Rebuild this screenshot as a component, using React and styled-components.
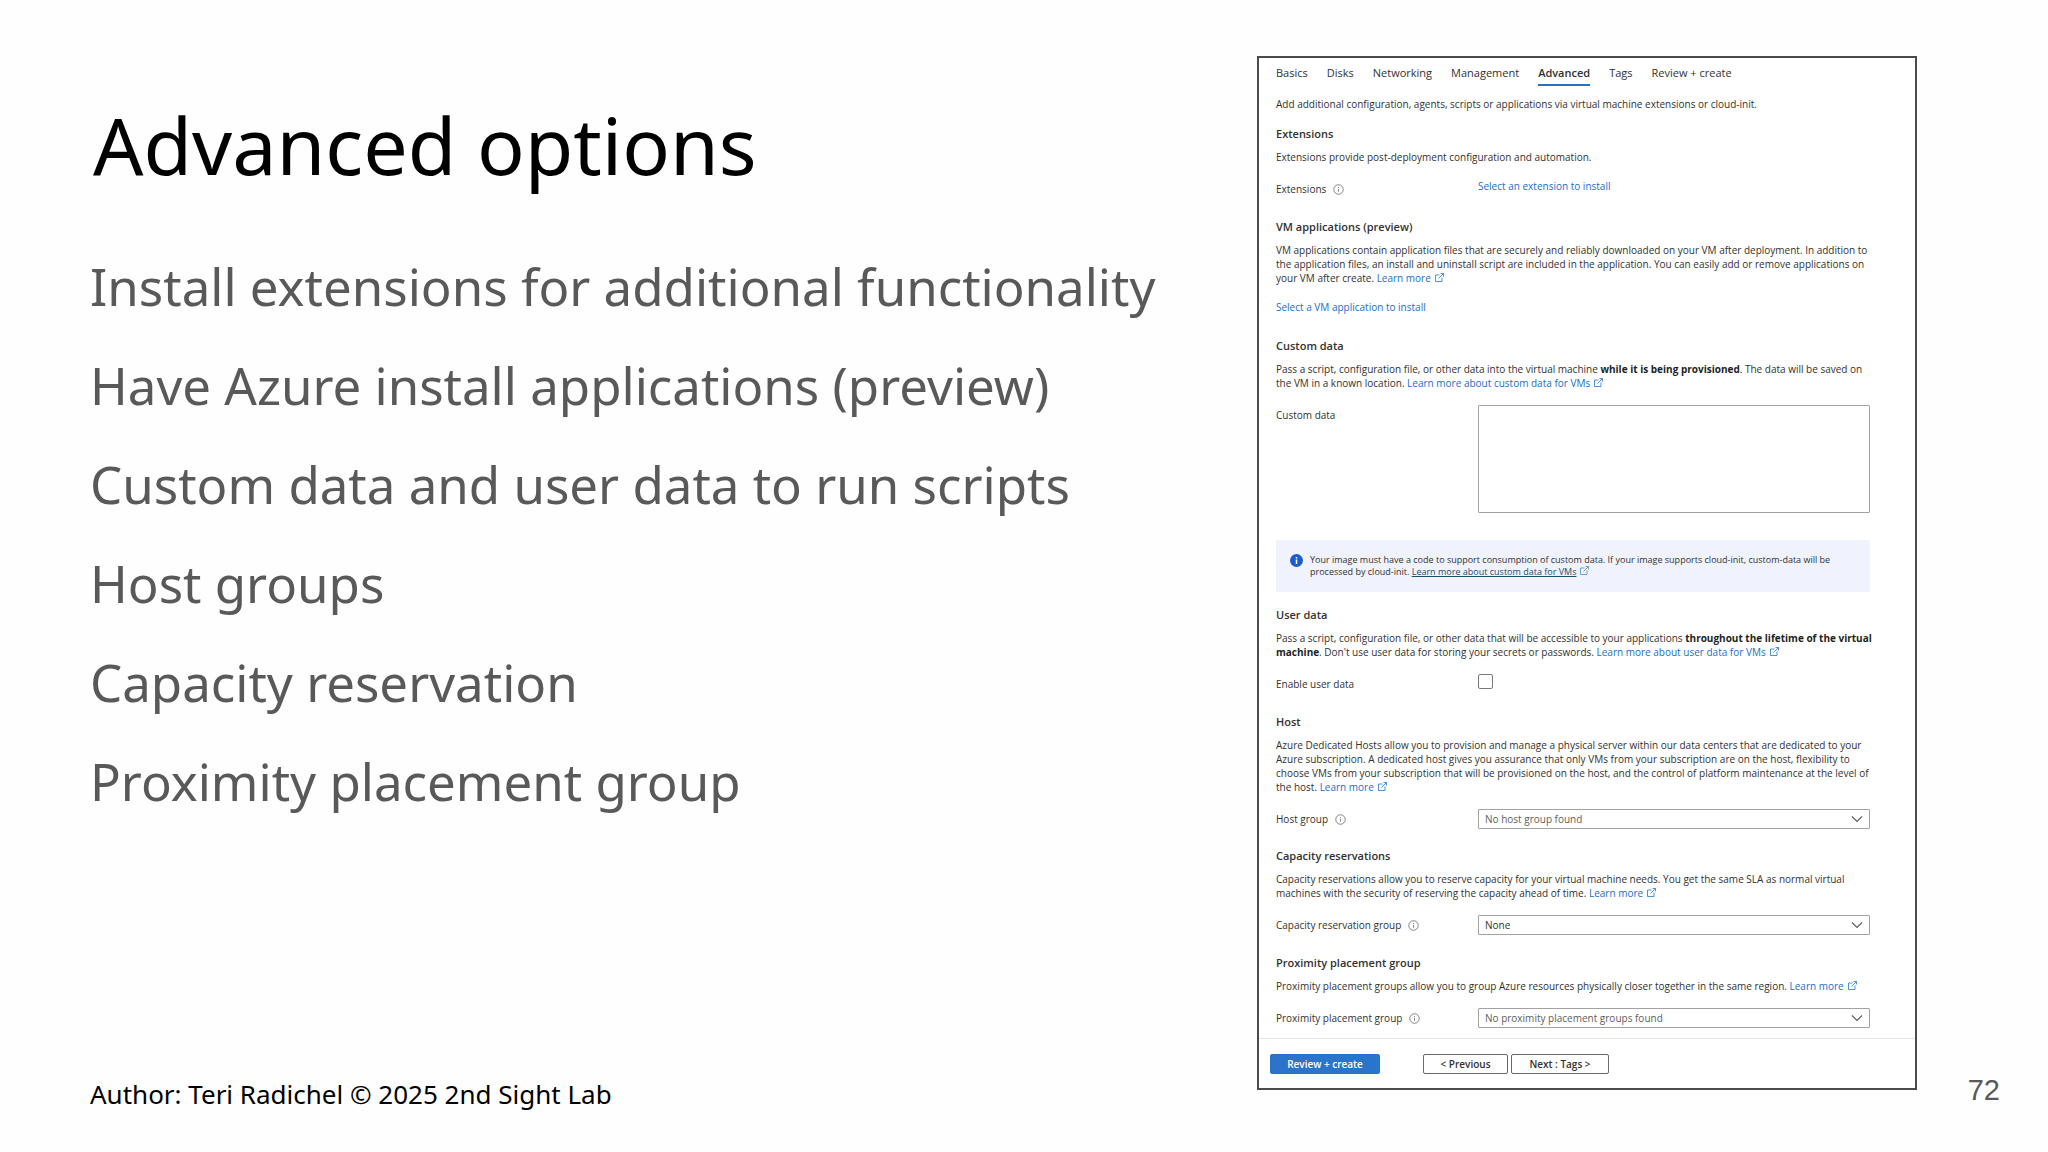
import React from "react";
import styled, { createGlobalStyle, css } from "styled-components";

const GlobalStyle = createGlobalStyle`
  *, *::before, *::after { box-sizing: border-box; }
  body { margin: 0; background: #fefefe; font-family: "Noto Sans", "Open Sans", sans-serif; }
  h1, h2, p, ul { margin: 0; padding: 0; }
`;

const Slide = styled.main`
  display: grid;
  grid-template-columns: minmax(0, 1257fr) minmax(0, 660fr) minmax(0, 131fr);
  min-height: 100vh;
`;

const Outline = styled.section`
  display: flex;
  flex-direction: column;
  padding: 91px 24px 39px 90px;
`;

const Title = styled.h1`
  font-size: 79px;
  line-height: 108px;
  font-weight: 400;
  color: #000;
  padding-left: 3px;
`;

const Topics = styled.ul`
  list-style: none;
  margin-top: 38px;
  color: #595959;
  font-size: 51px;
  line-height: 99px;
  white-space: nowrap;
`;

const Author = styled.footer`
  margin-top: auto;
  font-size: 26px;
  line-height: 38px;
  color: #000;
`;

const PageNumber = styled.aside`
  display: flex;
  align-items: flex-end;
  justify-content: flex-end;
  padding: 0 48px 46px 0;
  font-family: "Liberation Sans", Arial, sans-serif;
  font-size: 29px;
  line-height: 32px;
  color: #595959;
`;

const Panel = styled.form`
  align-self: start;
  margin-top: 56px;
  border: 2px solid #4b4b4b;
  background: #fff;
  color: #323130;
  font-family: "Open Sans", "Noto Sans", sans-serif;
  font-size: 10px;
  line-height: 14px;
`;

const PanelBody = styled.div`
  padding: 8px 45px 10px 17px;
`;

const Tabs = styled.nav`
  display: flex;
  gap: 19px;
  font-size: 11px;
`;

const Tab = styled.a`
  color: inherit;
  text-decoration: none;
  padding-bottom: 4px;
  border-bottom: 2px solid transparent;
  ${(p) =>
    p.$active &&
    css`
      font-weight: 600;
      border-color: #2473c5;
    `}
`;

const Intro = styled.p`
  margin-top: 11px;
`;

const Section = styled.section`
  margin-top: ${(p) => p.$gap || 21}px;
`;

const Heading = styled.h2`
  font-size: 11px;
  line-height: 14px;
  font-weight: 600;
  margin-bottom: 9px;
`;

const Text = styled.p`
  white-space: nowrap;
`;

const Strong = styled.strong`
  font-weight: 700;
  color: #201f1e;
`;

const Link = styled.a`
  color: #1a6fc4;
  text-decoration: none;
  svg { margin-left: 4px; }
`;

const NoticeLink = styled.a`
  color: #17506e;
  text-decoration: underline;
`;

const LinkRow = styled.div`
  margin-top: 15px;
`;

const Field = styled.div`
  display: grid;
  grid-template-columns: 202px minmax(0, 1fr);
  align-items: start;
  margin-top: 15px;
  min-height: 20px;
`;

const Label = styled.label`
  display: flex;
  align-items: center;
  gap: 7px;
  line-height: 20px;
`;

const SelectBox = styled.div`
  position: relative;
  svg { position: absolute; right: 7px; top: 6px; pointer-events: none; }
`;

const Select = styled.select`
  display: block;
  appearance: none;
  width: 100%;
  height: 20px;
  padding: 0 24px 0 6px;
  border: 1px solid #a3a2a1;
  border-radius: 1px;
  background: #fff;
  color: ${(p) => (p.$muted ? "#605e5c" : "#323130")};
  font: inherit;
`;

const TextArea = styled.textarea`
  display: block;
  width: 100%;
  height: 108px;
  border: 1px solid #a3a2a1;
  border-radius: 1px;
  background: #fff;
  resize: none;
  font: inherit;
`;

const Checkbox = styled.input`
  appearance: none;
  margin: 0;
  width: 15px;
  height: 15px;
  border: 1px solid #7a7978;
  border-radius: 2px;
  background: #fff;
`;

const Notice = styled.div`
  display: flex;
  gap: 7px;
  margin-top: 27px;
  padding: 14px;
  background: #f0f3fe;
  font-size: 9px;
  line-height: 12px;
  white-space: nowrap;
  > svg { flex: none; }
  a + svg { margin-left: 4px; color: #4c82b5; }
`;

const Actions = styled.div`
  display: flex;
  padding: 15px 11px 14px;
  border-top: 1px solid #e6e6e6;
`;

const Button = styled.button`
  height: 20px;
  padding: 0;
  width: ${(p) => p.$width}px;
  margin-right: ${(p) => p.$after || 0}px;
  border: 1px solid ${(p) => (p.$primary ? "#2b74cb" : "#6b6a69")};
  border-radius: 2px;
  background: ${(p) => (p.$primary ? "#2b74cb" : "#fff")};
  color: ${(p) => (p.$primary ? "#fff" : "#323130")};
  font: 600 10px/14px "Open Sans", "Noto Sans", sans-serif;
`;

const External = () => (
  <svg width="9" height="9" viewBox="0 0 18 18" fill="none" stroke="currentColor" strokeWidth="1.5" aria-hidden="true">
    <path d="M9 4H1v13h13V9M11 1h6v6M17 1 7 11" />
  </svg>
);

const InfoOutline = () => (
  <svg width="11" height="11" viewBox="0 0 22 22" fill="none" stroke="#605e5c" strokeWidth="1.5" aria-hidden="true">
    <circle cx="11" cy="11" r="9.5" />
    <path d="M11 9.5v6M11 6v2" />
  </svg>
);

const InfoSolid = () => (
  <svg width="13" height="13" viewBox="0 0 26 26" aria-hidden="true">
    <circle cx="13" cy="13" r="13" fill="#1b5dcc" />
    <path d="M13 11v9M13 6v3" stroke="#fff" strokeWidth="3" />
  </svg>
);

const Chevron = () => (
  <svg width="12" height="8" viewBox="0 0 12 8" fill="none" stroke="#605e5c" strokeWidth="1.2" aria-hidden="true">
    <path d="m1 1.5 5 5 5-5" />
  </svg>
);

const ExternalLink = ({ children }) => (
  <Link href="#">
    {children}
    <External />
  </Link>
);

const SelectField = ({ id, label, value, muted }) => (
  <Field>
    <Label htmlFor={id}>
      {label}
      <InfoOutline />
    </Label>
    <SelectBox>
      <Select id={id} $muted={muted}>
        <option>{value}</option>
      </Select>
      <Chevron />
    </SelectBox>
  </Field>
);

const tabs = ["Basics", "Disks", "Networking", "Management", "Advanced", "Tags", "Review + create"];

const topics = [
  "Install extensions for additional functionality",
  "Have Azure install applications (preview)",
  "Custom data and user data to run scripts",
  "Host groups",
  "Capacity reservation",
  "Proximity placement group",
];

export default function App() {
  return (
    <>
      <GlobalStyle />
      <Slide>
        <Outline>
          <Title>Advanced options</Title>
          <Topics>
            {topics.map((t) => (
              <li key={t}>{t}</li>
            ))}
          </Topics>
          <Author>Author: Teri Radichel © 2025 2nd Sight Lab</Author>
        </Outline>

        <Panel onSubmit={(e) => e.preventDefault()}>
          <PanelBody>
            <Tabs>
              {tabs.map((t) => (
                <Tab key={t} href="#" $active={t === "Advanced"}>
                  {t}
                </Tab>
              ))}
            </Tabs>
            <Intro>
              Add additional configuration, agents, scripts or applications via virtual machine extensions or cloud-init.
            </Intro>

            <Section $gap={16}>
              <Heading>Extensions</Heading>
              <Text>Extensions provide post-deployment configuration and automation.</Text>
              <Field>
                <Label as="span">
                  Extensions
                  <InfoOutline />
                </Label>
                <Link href="#">Select an extension to install</Link>
              </Field>
            </Section>

            <Section>
              <Heading>VM applications (preview)</Heading>
              <Text>
                VM applications contain application files that are securely and reliably downloaded on your VM after deployment. In addition to
                <br />
                the application files, an install and uninstall script are included in the application. You can easily add or remove applications on
                <br />
                your VM after create. <ExternalLink>Learn more</ExternalLink>
              </Text>
              <LinkRow>
                <Link href="#">Select a VM application to install</Link>
              </LinkRow>
            </Section>

            <Section $gap={25}>
              <Heading>Custom data</Heading>
              <Text>
                Pass a script, configuration file, or other data into the virtual machine <Strong>while it is being provisioned</Strong>. The data will be saved on
                <br />
                the VM in a known location. <ExternalLink>Learn more about custom data for VMs</ExternalLink>
              </Text>
              <Field>
                <Label htmlFor="custom-data">Custom data</Label>
                <TextArea id="custom-data" />
              </Field>
              <Notice>
                <InfoSolid />
                <p>
                  Your image must have a code to support consumption of custom data. If your image supports cloud-init, custom-data will be
                  <br />
                  processed by cloud-init. <NoticeLink href="#">Learn more about custom data for VMs</NoticeLink>
                  <External />
                </p>
              </Notice>
            </Section>

            <Section $gap={16}>
              <Heading>User data</Heading>
              <Text>
                Pass a script, configuration file, or other data that will be accessible to your applications <Strong>throughout the lifetime of the virtual</Strong>
                <br />
                <Strong>machine</Strong>. Don't use user data for storing your secrets or passwords. <ExternalLink>Learn more about user data for VMs</ExternalLink>
              </Text>
              <Field>
                <Label htmlFor="enable-user-data">Enable user data</Label>
                <Checkbox id="enable-user-data" type="checkbox" />
              </Field>
            </Section>

            <Section>
              <Heading>Host</Heading>
              <Text>
                Azure Dedicated Hosts allow you to provision and manage a physical server within our data centers that are dedicated to your
                <br />
                Azure subscription. A dedicated host gives you assurance that only VMs from your subscription are on the host, flexibility to
                <br />
                choose VMs from your subscription that will be provisioned on the host, and the control of platform maintenance at the level of
                <br />
                the host. <ExternalLink>Learn more</ExternalLink>
              </Text>
              <SelectField id="host-group" label="Host group" value="No host group found" muted />
            </Section>

            <Section $gap={20}>
              <Heading>Capacity reservations</Heading>
              <Text>
                Capacity reservations allow you to reserve capacity for your virtual machine needs. You get the same SLA as normal virtual
                <br />
                machines with the security of reserving the capacity ahead of time. <ExternalLink>Learn more</ExternalLink>
              </Text>
              <SelectField id="capacity-group" label="Capacity reservation group" value="None" />
            </Section>

            <Section>
              <Heading>Proximity placement group</Heading>
              <Text>
                Proximity placement groups allow you to group Azure resources physically closer together in the same region. <ExternalLink>Learn more</ExternalLink>
              </Text>
              <SelectField id="proximity-group" label="Proximity placement group" value="No proximity placement groups found" muted />
            </Section>
          </PanelBody>
          <Actions>
            <Button type="submit" $primary $width={110} $after={43}>
              Review + create
            </Button>
            <Button type="button" $width={85} $after={3}>
              &lt; Previous
            </Button>
            <Button type="button" $width={98}>
              Next : Tags &gt;
            </Button>
          </Actions>
        </Panel>

        <PageNumber>72</PageNumber>
      </Slide>
    </>
  );
}
